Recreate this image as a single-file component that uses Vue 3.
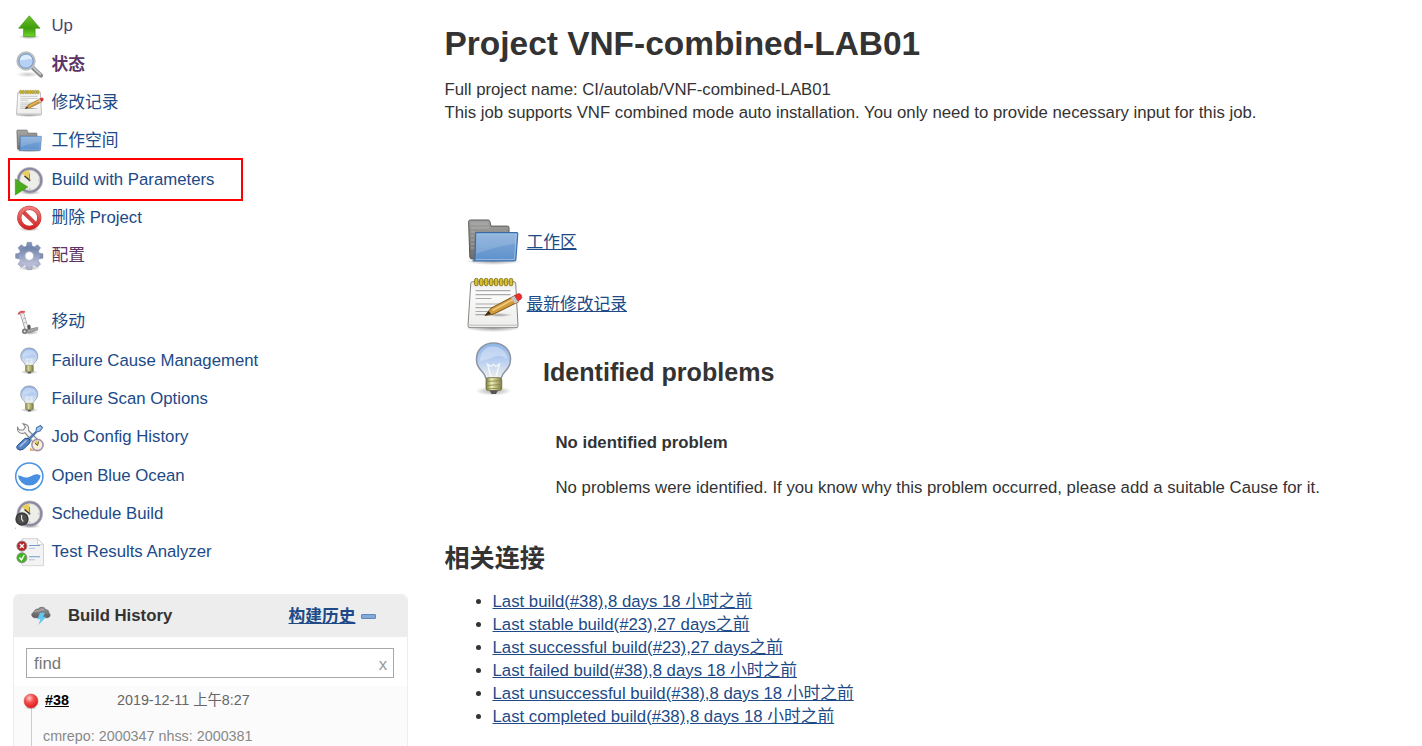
<script setup>
const actions = [
  { icon: 'up', label: 'Up', cls: 'parent' },
  { icon: 'search', label: '状态', cls: 'visited strong' },
  { icon: 'notepad', label: '修改记录' },
  { icon: 'folder', label: '工作空间' },
  { icon: 'play', label: 'Build with Parameters', marked: true },
  { icon: 'stop', label: '删除 Project' },
  { icon: 'gear', label: '配置', cls: 'visited' },
]
const tools = [
  { icon: 'trolley', label: '移动' },
  { icon: 'bulb', label: 'Failure Cause Management' },
  { icon: 'bulb', label: 'Failure Scan Options' },
  { icon: 'wrench', label: 'Job Config History' },
  { icon: 'ocean', label: 'Open Blue Ocean' },
  { icon: 'schedule', label: 'Schedule Build' },
  { icon: 'results', label: 'Test Results Analyzer' },
]
const groups = [actions, tools]
const wide = ['notepad', 'folder', 'bulb']
const box = (name) => (wide.includes(name) ? '0 0 60 60' : '0 0 30 30')
const builds = [
  'Last build(#38),8 days 18 小时之前',
  'Last stable build(#23),27 days之前',
  'Last successful build(#23),27 days之前',
  'Last failed build(#38),8 days 18 小时之前',
  'Last unsuccessful build(#38),8 days 18 小时之前',
  'Last completed build(#38),8 days 18 小时之前',
]
const rings = [0, 1, 2, 3, 4, 5, 6, 7]
const teeth = [0, 45, 90, 135, 180, 225, 270, 315]
</script>

<template>
  <div class="page">
    <svg class="defs" width="0" height="0">
      <defs>
        <linearGradient id="gGreen" x1="0" y1="0" x2="0" y2="1">
          <stop offset="0" stop-color="#6fbf2e" /><stop offset=".6" stop-color="#3f9d0c" /><stop offset="1" stop-color="#6fd62a" />
        </linearGradient>
        <linearGradient id="gPlay" x1="0" y1="0" x2="0" y2="1">
          <stop offset="0" stop-color="#55a82a" /><stop offset="1" stop-color="#3fae12" />
        </linearGradient>
        <linearGradient id="gBlue" x1="0" y1="0" x2="0" y2="1">
          <stop offset="0" stop-color="#83abd9" /><stop offset="1" stop-color="#5e91cb" />
        </linearGradient>
        <linearGradient id="gGray" x1="0" y1="0" x2="0" y2="1">
          <stop offset="0" stop-color="#a2a2a0" /><stop offset="1" stop-color="#6c6c6c" />
        </linearGradient>
        <linearGradient id="gPaper" x1="0" y1="0" x2="0" y2="1">
          <stop offset="0" stop-color="#e6e6e4" /><stop offset=".2" stop-color="#fbfbfb" /><stop offset="1" stop-color="#ededeb" />
        </linearGradient>
        <linearGradient id="gBulb" x1="0" y1="0" x2="0" y2="1">
          <stop offset="0" stop-color="#8fb4e6" /><stop offset=".5" stop-color="#b9cff0" /><stop offset="1" stop-color="#eef0ee" />
        </linearGradient>
        <linearGradient id="gBase" x1="0" y1="0" x2="1" y2="0">
          <stop offset="0" stop-color="#77773c" /><stop offset=".35" stop-color="#efefb5" /><stop offset="1" stop-color="#7b7b42" />
        </linearGradient>
        <linearGradient id="gGear" x1="0" y1="0" x2="0" y2="1">
          <stop offset="0" stop-color="#7487ad" /><stop offset="1" stop-color="#b9bcd6" />
        </linearGradient>
        <linearGradient id="gRed" x1="0" y1="0" x2="0" y2="1">
          <stop offset="0" stop-color="#ee7f7f" /><stop offset="1" stop-color="#d32525" />
        </linearGradient>
        <linearGradient id="gCloud" x1="0" y1="0" x2="0" y2="1">
          <stop offset="0" stop-color="#999" /><stop offset="1" stop-color="#5c5c5c" />
        </linearGradient>
        <radialGradient id="gBall" cx=".38" cy=".3" r=".7">
          <stop offset="0" stop-color="#ffc9c9" /><stop offset=".45" stop-color="#f65050" /><stop offset="1" stop-color="#dc1a1a" />
        </radialGradient>
        <radialGradient id="gShade">
          <stop offset="0" stop-color="#000" stop-opacity=".35" /><stop offset="1" stop-color="#000" stop-opacity="0" />
        </radialGradient>

        <g id="up">
          <ellipse cx="15.3" cy="25.8" rx="11" ry="2.5" fill="url(#gShade)" />
          <path d="M15.3 4.8 26 17.2h-4.9v8.4H9.6v-8.4H4.7z" fill="url(#gGreen)" stroke="#4c9f1d" stroke-width=".8" stroke-linejoin="round" />
        </g>
        <g id="search">
          <ellipse cx="14" cy="25.500" rx="12" ry="3" fill="url(#gShade)" opacity=".6" />
          <path d="M18.500 18.500 27 26.500" stroke="#85888a" stroke-width="4.200" stroke-linecap="round" />
          <path d="M19.500 18.800 26.500 25.300" stroke="#c9cbcc" stroke-width="1.600" stroke-linecap="round" />
          <circle cx="12" cy="12" r="8.300" fill="#b7d1f4" stroke="#bdbfbe" stroke-width="2.800" />
          <circle cx="12" cy="12" r="7.200" fill="none" stroke="#6d97d2" stroke-width="1" />
          <path d="M6 11.200C6.500 7.200 10 5.500 13.500 6.100 16 6.700 17.500 8.200 18 10.200 14 9.200 10 11.700 6 11.200z" fill="#dfecfc" />
        </g>
        <g id="notepad">
          <ellipse cx="30" cy="54.500" rx="28" ry="3.500" fill="url(#gShade)" />
          <path d="M9.500 7.700h41.500q1.500 0 1.700 1.500L55 51.500q.2 2.200-2 2.200H7q-2.200 0-2-2.200L7.800 9.200q.2-1.500 1.700-1.500z" fill="url(#gPaper)" stroke="#858585" stroke-width="1" />
          <path d="M6 51.200h48" stroke="#bbb" stroke-width="1" />
          <g v-for="r in rings" :key="r" :transform="`translate(${r * 4.950} 0)`">
            <rect x="11.600" y="4.400" width="3.500" height="7.300" rx="1.500" fill="#d8c02c" stroke="#847317" stroke-width=".9" />
          </g>
          <path d="M12.500 16.700h35M12.500 20.700h35M12.500 24.500h16M12.500 30h31M12.500 33.700h21M12.500 37.500h17M12.500 40.700h10" stroke="#aaa" stroke-width="1.200" />
          <ellipse cx="36" cy="41" rx="14" ry="2" fill="url(#gShade)" />
          <path d="M22 41.500 28 34.200 52 21.500l4 6-25.500 12.700z" fill="#d29a3b" stroke="#7c5514" stroke-width="1" stroke-linejoin="round" />
          <path d="M29.500 36.500 51 25" stroke="#f1cd82" stroke-width="1.500" />
          <path d="m22 41.500 3.800-4.600 2.200 3.200z" fill="#352a1a" />
          <path d="m48 23.700 4-2.300 4 6-4.200 2.200z" fill="#c5c5cb" />
          <path d="m51.500 21.500 3.600-1.800q2.400-.5 3.400 1.600 1.100 2.600-.8 4l-2.800 1.500z" fill="#e5322d" stroke="#b91e1e" stroke-width=".6" />
        </g>
        <g id="folder">
          <ellipse cx="30" cy="49.500" rx="28" ry="3.500" fill="url(#gShade)" />
          <path d="M7.500 8h17.700q1.300 0 1.600 1.300l1.200 4.800h16.500q1.500 0 1.500 1.500V47H9q-2 0-2.200-2L5.600 10q-.1-2 1.900-2z" fill="url(#gGray)" stroke="#5b5b5b" stroke-width="1" />
          <path d="M8 12h17M8 16h18M8 20h4M8 24h3M8 28h3M8 32h3M8 36h3" stroke="#b5b5b5" stroke-width=".8" />
          <path d="M12.700 20.600h41q1.200 0 1.100 1.300l-1.900 25.500q-.1 1.600-1.700 1.600H10q2-1 2-3z" fill="url(#gBlue)" stroke="#3b6ca8" stroke-width="1.100" stroke-linejoin="round" />
          <path d="M13 22h40.500L53 32q-16 1-39.800 10z" fill="#fff" opacity=".15" />
          <path d="M13.500 22h39.800l-1.800 25.500H13" fill="none" stroke="#a8c7ea" stroke-width=".7" />
        </g>
        <g id="bulb">
          <ellipse cx="30.500" cy="52" rx="18" ry="4.500" fill="url(#gShade)" />
          <path d="M30.500 4C20.500 4 13.500 11 13.500 20.500c0 5.500 2.500 9 5.500 12 2.500 2.500 3.500 5 4 7h15c.5-2 1.500-4.500 4-7 3-3 5.500-6.500 5.500-12C47.500 11 40.500 4 30.500 4z" fill="url(#gBulb)" stroke="#8d96a5" stroke-width="1.600" />
          <path d="M17 22C17 13 22.500 7.500 30 7.500S44 13 44 20c-4-3-8-4-13-2-5 1.500-9 4-14 4z" fill="#dfeafa" opacity=".5" />
          <path d="M28 38 24.500 25l3.500 2.500 2.500-2 2.500 2 3.500-2.500L33 38" fill="none" stroke="#fff" stroke-width="1.300" opacity=".8" />
          <rect x="23" y="38.700" width="15.800" height="12.800" rx="2.500" fill="url(#gBase)" stroke="#70703c" stroke-width=".8" />
          <path d="M23.500 42.500 38.500 41.500M23.500 46.500l15-1M24 50l14-1" stroke="#85854c" stroke-width=".9" />
          <path d="M26.500 51.500h8.500l-2 3.500h-4.500z" fill="#555" />
        </g>
        <g id="clock">
          <ellipse cx="16" cy="27.500" rx="11" ry="2.500" fill="url(#gShade)" />
          <circle cx="15.800" cy="15.200" r="11.500" fill="#eeeee9" stroke="#8b899f" stroke-width="2.600" />
          <circle cx="15.800" cy="15.200" r="12.900" fill="none" stroke="#acabb8" stroke-width=".6" />
          <circle cx="15.800" cy="15.200" r="10" fill="none" stroke="#c7c6ce" stroke-width=".6" />
          <path d="M15.500 14.800 7.800 8.500Q10.500 5.300 15.500 5.600z" fill="#e9cf63" />
          <path d="m10.500 11 4.500 3.800" stroke="#3f3724" stroke-width="1.500" />
          <path d="M15.500 8.500v6" stroke="#a88d3c" stroke-width="1" />
          <circle cx="15.500" cy="15.300" r="1" fill="#555" />
          <path d="M15.800 23v1.500M24 15.200h1.200" stroke="#aaa" />
        </g>
        <g id="play">
          <use href="#clock" />
          <path d="M1.300 14 13.800 22 1.300 30z" fill="url(#gPlay)" stroke="#3e8e14" stroke-width=".6" />
        </g>
        <g id="schedule">
          <use href="#clock" y="-.500" />
          <circle cx="8" cy="20" r="6.700" fill="#3a3a3a" />
          <circle cx="8" cy="20" r="5" fill="#505050" />
          <path d="M7.600 16.100v4l1.700 2.400" fill="none" stroke="#eee" stroke-width="1.100" />
          <path d="M1 29.200h.8" stroke="#888" stroke-width=".8" />
        </g>
        <g id="stop">
          <ellipse cx="15.300" cy="26" rx="11" ry="2.500" fill="url(#gShade)" />
          <path d="m8.300 8 14 13.600" stroke="#d84343" stroke-width="4" />
          <circle cx="15.300" cy="14.800" r="10" fill="none" stroke="#c43030" stroke-width="4.200" />
          <circle cx="15.300" cy="14.800" r="10" fill="none" stroke="url(#gRed)" stroke-width="3.300" />
        </g>
        <g id="gear">
          <ellipse cx="15.300" cy="27" rx="11" ry="2.500" fill="url(#gShade)" />
          <g v-for="t in teeth" :key="t" :transform="`rotate(${t} 15.300 15)`">
            <path d="M12 7 13.100 1.300h4.400L18.600 7z" :fill="t > 90 && t < 270 ? '#b1b5d0' : '#8291b4'" stroke="#7f8bab" stroke-width=".5" />
          </g>
          <circle cx="15.300" cy="15" r="7.500" fill="none" stroke="url(#gGear)" stroke-width="6" />
          <circle cx="15.300" cy="15" r="4.300" fill="#fff" stroke="#8c94b2" stroke-width=".6" />
        </g>
        <g id="trolley">
          <ellipse cx="16" cy="25.500" rx="9" ry="2.500" fill="url(#gShade)" />
          <path d="M8 6.500 12.800 22.500" stroke="#979797" stroke-width="4.200" />
          <path d="M8.200 7 12.900 22" stroke="#ededed" stroke-width="2.800" />
          <path d="m9 12 3-1M10 16l3-1" stroke="#aaa" stroke-width=".8" />
          <path d="M4.500 7.500Q5.500 3.800 10.800 5" fill="none" stroke="#dc5454" stroke-width="1.900" />
          <path d="M12.500 22.800 23.700 20.300v2.700l-9.500 3z" fill="#a5a6a3" stroke="#777" stroke-width=".6" />
          <ellipse cx="15" cy="20" rx="1.700" ry="2.500" fill="#555" />
          <circle cx="10.700" cy="24.300" r="2.700" fill="#777" /><circle cx="10.700" cy="24.300" r="1.100" fill="#ddd" />
        </g>
        <g id="wrench">
          <path d="M3.500 5.500q-.6 5.500 4.800 6 1.700 0 2.700-.7L22.500 24q2.400 1.500 4-.5 1-2-.5-3.500L14.500 8.500Q15.500 4 12 2.500l-3-.8 2.500 3.500L9.300 8 5.500 8z" fill="#f4f4f2" stroke="#888" stroke-width="1.100" />
          <path d="M13.500 17.500 22 9.500l.5-3.600L26.500 3.500l2 2L26 9l-3.200 1-8 8.500z" fill="#a6c5e9" stroke="#4d76ae" stroke-width="1.100" />
          <path d="M4 22.800 11 16.400q3.800-1.200 5 1.500.8 2-.6 3.500L9.500 27q-4 2.500-6.500-.5-1-2 1-3.700z" fill="#5585c2" stroke="#24518f" stroke-width="1" />
          <path d="m6.300 24.200 5.800-5.500" stroke="#adc8e9" stroke-width="1.300" stroke-linecap="round" />
          <circle cx="23.500" cy="23" r="5.600" fill="#f5efd6" stroke="#a592b0" stroke-width="1.600" />
          <path d="M23.500 23.500 20 20.500l3.500-2z" fill="#e3c655" />
          <path d="M21 21.200 23.500 23.500M24.500 19.500l-1 4" fill="none" stroke="#604e20" stroke-width="1" />
          <path d="M16 29v-3.500l5 3.500z" fill="#e4b078" />
        </g>
        <g id="ocean">
          <circle cx="15.300" cy="15.500" r="13.600" fill="#fff" stroke="#4b93dc" stroke-width="1.500" />
          <path d="M3.900 14.500C7.500 14.500 9.500 17.200 13.500 16.500 18 15.700 20.500 11 26.700 14.500A11.500 11.600 0 0 1 3.900 14.500z" fill="#4990e2" />
        </g>
        <g id="results">
          <path d="M8 1.700h15.500l6 6v21H8z" fill="#f3f3f3" stroke="#ccc" stroke-width=".8" />
          <path d="M23.500 1.700v6h6z" fill="#fff" stroke="#bbb" stroke-width=".6" />
          <path d="M15 8.500h11M15 19.800h11" stroke="#6f9ecf" stroke-width="1.100" /><path d="M15 11.300h6M15 22.800h6" stroke="#abc2dc" />
          <circle cx="7.900" cy="9.100" r="5" fill="#b92328" stroke="#8d8a8a" stroke-width=".9" />
          <path d="m5.900 7.100 4 4m0-4-4 4" stroke="#fff" stroke-width="1.400" />
          <circle cx="7.900" cy="20.800" r="5" fill="#3eb51c" stroke="#8d8a8a" stroke-width=".9" />
          <path d="m5.500 20.500 2 2.500 2.700-5" fill="none" stroke="#fff" stroke-width="1.400" />
        </g>
      </defs>
    </svg>

    <aside class="side">
      <nav v-for="(g, i) in groups" :key="i" class="group">
        <div v-for="item in g" :key="item.label" class="task" :class="item.cls">
          <svg class="ico" :viewBox="box(item.icon)"><use :href="'#' + item.icon" /></svg>
          <a>{{ item.label }}</a>
          <span v-if="item.marked" class="mark"></span>
        </div>
      </nav>

      <section class="history">
        <header>
          <svg class="storm" viewBox="0 0 20 20">
            <path d="M3.500 11.700C-.2 11 .1 6.800 3 6.200 3.500 3.200 6.500 2.800 7.300 3.200 8.500.5 14 .7 14.500 3.700c3.200 0 3.500 2 3.200 3 2.300 1.500 1.500 4.800-1.200 5z" fill="url(#gCloud)" stroke="#5d5d5d" stroke-width=".7" />
            <path d="M4 5.800q2-2 4-.5 2.500-3 5-1" fill="none" stroke="#bbb" stroke-width=".9" />
            <path d="M9 6.800h5l-2 3.900h3.200L7.500 19l1.900-5.800H6.300z" fill="#62c7ef" />
          </svg>
          <b>Build History</b>
          <a>构建历史</a>
          <i class="collapse"></i>
        </header>
        <div class="find"><span>find</span><span class="clear">x</span></div>
        <div class="build">
          <div class="rail">
            <svg width="16" height="17" viewBox="0 0 16 17">
              <ellipse cx="8" cy="14.600" rx="7" ry="2" fill="url(#gShade)" />
              <circle cx="8" cy="8" r="7" fill="url(#gBall)" stroke="#cf4444" stroke-width=".5" />
            </svg>
          </div>
          <div class="info">
            <div class="line"><a>#38</a><span>2019-12-11 上午8:27</span></div>
            <p>cmrepo: 2000347 nhss: 2000381</p>
          </div>
        </div>
      </section>
    </aside>

    <main class="main">
      <h1>Project VNF-combined-LAB01</h1>
      <p class="desc">Full project name: CI/autolab/VNF-combined-LAB01<br><span>This job supports VNF combined mode auto installation. You only need to provide necessary input for this job.</span></p>
      <div class="shortcuts">
        <div class="shortcut"><svg viewBox="0 0 60 60"><use href="#folder" /></svg><a>工作区</a></div>
        <div class="shortcut"><svg viewBox="0 0 60 60"><use href="#notepad" /></svg><a>最新修改记录</a></div>
        <div class="shortcut problems"><svg viewBox="0 0 60 60"><use href="#bulb" /></svg><h2>Identified problems</h2></div>
      </div>
      <div class="cause">
        <b>No identified problem</b>
        <p>No problems were identified. If you know why this problem occurred, please add a suitable Cause for it.</p>
      </div>
      <h2 class="related">相关连接</h2>
      <ul>
        <li v-for="b in builds" :key="b"><a>{{ b }}</a></li>
      </ul>
    </main>
  </div>
</template>

<style>
html, body { margin: 0; background: #fff; overflow: hidden; }
</style>

<style scoped>
.page { display: flex; width: 1422px; height: 746px; overflow: hidden; box-sizing: border-box; font: 16.760px/23px "Liberation Sans", "Noto Sans CJK SC", sans-serif; color: #333; }
.defs { position: absolute; }
.side { width: 408px; flex: none; padding-top: 11px; box-sizing: border-box; }
.group { margin-bottom: 27.750px; }
.group + .group { margin-bottom: 18.350px; }
.task { position: relative; display: flex; height: 38.400px; padding-left: 14px; color: #204a87; }
.group + .group .task { height: 38.300px; }
.ico { width: 30px; height: 30px; overflow: visible; margin-right: 7.500px; flex: none; }
.task a { line-height: 29px; white-space: nowrap; }
.parent { color: #4b4472; }
.visited { color: #5c3566; }
.strong { font-weight: bold; }
.strong a { line-height: 31px; }
.mark { position: absolute; left: 8px; top: -6.600px; width: 231px; height: 39px; border: 2px solid #f00; }
.history { margin-left: 13px; width: 395px; height: 160px; box-sizing: border-box; border: 1px solid #eee; border-radius: 6px 6px 0 0; overflow: hidden; background: #fff; }
.history header { display: flex; align-items: center; height: 42px; background: #ededed; padding-left: 17px; }
.storm { width: 20px; height: 20px; margin-right: 17px; }
.history header b { width: 220.500px; }
.history header a { font-weight: bold; color: #204a87; text-decoration: underline; margin-top: 1px; }
.collapse { width: 13px; height: 3px; margin: 2px 0 0 5px; border: 1px solid #5c88c1; border-radius: 1px; background: #85a9d6; }
.find { display: flex; justify-content: space-between; box-sizing: border-box; height: 30px; width: 368px; margin: 11px 0 8px 12px; border: 1px solid #a9a9a9; padding: 1px 6px 0 7px; line-height: 28px; color: #777; }
.clear { color: #999; padding-top: 1px; line-height: 27px; }
.build { display: flex; height: 70px; background: #fbfbfb; font-size: 14.330px; color: #666; }
.rail { width: 29px; height: 70px; box-sizing: border-box; padding: 7px 0 0 8.500px; background: linear-gradient(#ccc, #ccc) 17px 22px / 1px 60px no-repeat; }
.line { display: flex; padding: 3px 0 0 2px; }
.line a { width: 72px; font-weight: bold; color: #000; text-decoration: underline; }
.info p { margin: 13px 0 0; color: #888; }
.main { flex: 1; padding-left: 36.500px; }
h1 { margin: 24px 0 0; font-size: 33.450px; line-height: 40px; }
.desc { margin: 14px 0 0; white-space: nowrap; }
.shortcuts { margin: 87px 0 0 18px; }
.shortcut { display: flex; align-items: center; height: 62px; }
.shortcut svg { width: 60px; height: 60px; margin-right: 4px; flex: none; }
.shortcut a, li a { color: #204a87; text-decoration: underline; }
h2 { font-size: 25.100px; line-height: 30px; margin: 0; }
.shortcut.problems svg { margin: 5px 20.500px 0 0; }
.problems h2 { margin-top: 12px; }
.cause { margin: 34px 0 0 111px; white-space: nowrap; }
.cause p { margin: 22px 0 0; }
.related { margin-top: 44px; }
ul { margin: 17px 0 0; padding-left: 48px; white-space: nowrap; }
</style>
